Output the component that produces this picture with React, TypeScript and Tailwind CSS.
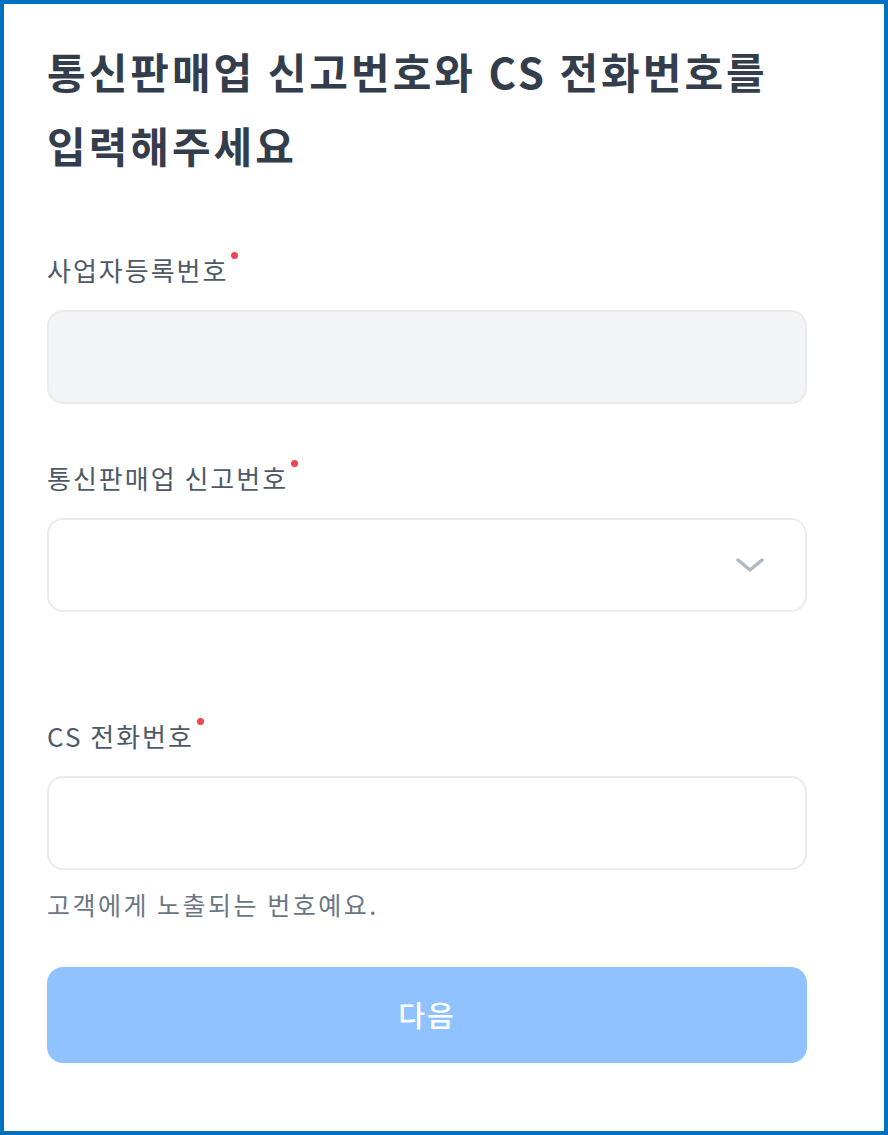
import React from "react";

const font = { fontFamily: '"Noto Sans CJK KR", "Noto Sans", sans-serif' };

function Label({ children, top }: { children: React.ReactNode; top?: string }) {
  return (
    <div className={`flex items-start text-[26px] leading-[36px] tracking-[2px] text-[#4e5968] ${top ?? ""}`}>
      <span>{children}</span>
      <span className="ml-[3px] mt-[0px] h-[7px] w-[7px] rounded-full bg-[#f04452]" />
    </div>
  );
}

export default function App() {
  return (
    <div
      style={font}
      className="box-border h-[1135px] w-[888px] border-4 border-[#0070C0] bg-white pl-[43px] pt-[30px]"
    >
      <div className="w-[760px]">
        <h1 className="text-[42px] font-bold leading-[74px] tracking-[3px] text-[#333d4b]">
          통신판매업 신고번호와 CS 전화번호를
          <br />
          입력해주세요
        </h1>

        <Label top="mt-[70px]">사업자등록번호</Label>
        <div className="mt-[22px] h-[94px] rounded-[16px] border-2 border-[#e9ebee] bg-[#f2f4f6]" />

        <Label top="mt-[56px]">통신판매업 신고번호</Label>
        <div className="mt-[22px] flex h-[94px] items-center justify-end rounded-[16px] border-2 border-[#e9ebee] bg-white pr-[40px]">
          <svg width="30" height="16" viewBox="0 0 30 16" fill="none">
            <path d="M3 3 L15 13 L27 3" stroke="#b0b8c1" strokeWidth="3.5" strokeLinecap="round" strokeLinejoin="round" />
          </svg>
        </div>

        <Label top="mt-[106px]">CS 전화번호</Label>
        <div className="mt-[22px] h-[94px] rounded-[16px] border-2 border-[#e9ebee] bg-white" />
        <p className="mt-[17px] text-[25px] leading-[34px] tracking-[2.5px] text-[#6b7684]">고객에게 노출되는 번호예요.</p>

        <button className="mt-[46px] flex h-[96px] w-full items-center justify-center rounded-[16px] bg-[#90c2ff] text-[29px] font-medium tracking-[2px] text-white">
          다음
        </button>
      </div>
    </div>
  );
}
